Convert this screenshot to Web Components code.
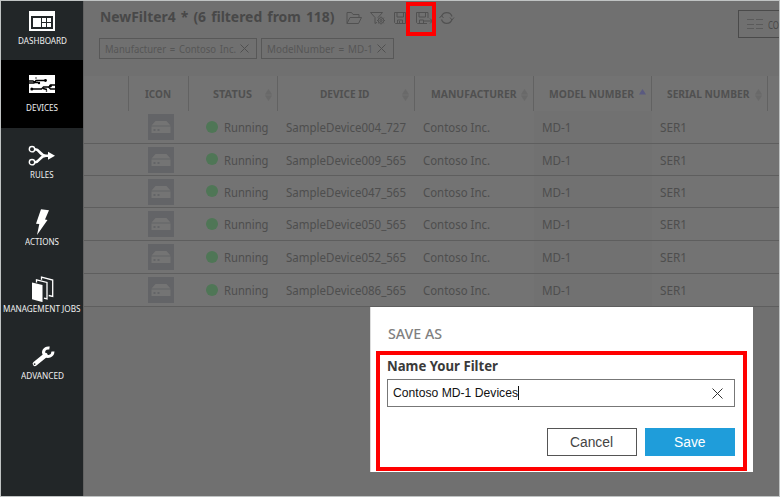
<!DOCTYPE html>
<html lang="en"><head><meta charset="utf-8"><title>Devices</title>
<style>
html,body{margin:0;padding:0;width:780px;height:497px;overflow:hidden}
body{font-family:"Noto Sans","Open Sans",sans-serif}
</style></head><body><device-app></device-app>
<script>
const define=(name,html,after)=>{
  const t=document.createElement('template');t.innerHTML=html;
  customElements.define(name,class extends HTMLElement{
    connectedCallback(){
      if(this.shadowRoot)return;
      this.attachShadow({mode:'open'}).append(t.content.cloneNode(true));
      if(after)after(this,this.shadowRoot);
    }
  });
};

/* Single line of text condensed or widened to the width in its "w" attribute */
define('fit-text',`<style>:host{display:inline-block;white-space:nowrap;flex:none}
span{display:inline-block;transform-origin:0 50%}</style><span><slot></slot></span>`,(el,r)=>{
  const s=r.querySelector('span'),w=+el.getAttribute('w');
  el.style.width=w+'px';
  s.style.transform=`scaleX(${w/s.getBoundingClientRect().width})`;
});

define('nav-item',`<style>
:host{display:flex;flex-direction:column;justify-content:flex-end;align-items:center;height:67px;padding-bottom:13px;box-sizing:border-box;color:#f0f0f0;font-size:9.5px;line-height:14px;flex:none}
:host([first]){height:59px;padding-bottom:12px}
:host([active]){background:#000;height:68px}
::slotted(svg){display:block;width:32px;height:32px;flex:none}
</style><slot name="icon"></slot><slot></slot>`);

define('side-nav',`<style>
:host{display:flex;flex-direction:column;width:82px;background:#222628}
</style>
<nav-item first><svg slot="icon" viewBox="0 0 32 32"><path fill="#fff" d="M3 9h26v20H3z"/><path fill="#222628" d="M5 14h22v13H5z"/><path fill="#fff" d="M7 16h8v9H7zM16 16h4v4h-4zM21 16h4v4h-4zM16 21h4v4h-4zM21 21h4v4h-4z"/></svg><fit-text w="49">DASHBOARD</fit-text></nav-item>
<nav-item active><svg slot="icon" viewBox="0 0 32 32"><path fill="#fff" d="M3 6h26v18H3z"/><g fill="none" stroke="#000" stroke-width="1.3"><path d="M3 14h5l2-2.5h9M3 12h4l2 1.500h3M5.500 20h10l2-2h5l2 2h4.500M17 19.500l4 1M23 18l2-2h4"/></g><g><circle cx="19.500" cy="11.500" r="1.400"/><circle cx="13" cy="14" r="1.200"/><circle cx="5.800" cy="20" r="1.500"/><circle cx="24.500" cy="17" r="1.400"/><circle cx="20.500" cy="22" r=".8"/><circle cx="10" cy="9" r=".7"/></g></svg><fit-text w="32">DEVICES</fit-text></nav-item>
<nav-item><svg slot="icon" viewBox="0 0 32 32"><g fill="none" stroke="#fff"><circle cx="6" cy="13.200" r="2.700" stroke-width="1.400"/><circle cx="6" cy="26.200" r="2.700" stroke-width="1.400"/><path stroke-width="2.600" d="M9 13.200c5 0 4.500 6.500 11 6.500M9 26.200c5 0 4.500-6.500 11-6.500h4"/></g><path fill="#fff" d="M22 15.700l7 4-7 4z"/></svg><fit-text w="23.500">RULES</fit-text></nav-item>
<nav-item><svg slot="icon" viewBox="0 0 32 32"><path fill="#fff" d="M15 6.300l8 .9-4 9.300 2.500.4-10.500 15 2.300-10.800-3.300-.4z"/></svg><fit-text w="34">ACTIONS</fit-text></nav-item>
<nav-item><svg slot="icon" viewBox="0 0 32 32"><path fill="#fff" d="M6 12.500l10.500 2.600v17L6 29.300z"/><path fill="none" stroke="#fff" stroke-width="1.300" d="M10.500 12.500V9.800l10.500 2.600v16.500l-3-.8M15.500 9.800V7.200L26.700 10v16.500l-4-1"/></svg><fit-text w="77.500">MANAGEMENT JOBS</fit-text></nav-item>
<nav-item><svg slot="icon" viewBox="0 0 32 32"><path fill="none" stroke="#fff" stroke-width="4.600" stroke-linecap="round" d="M9 26.800l10.500-8.500"/><path fill="none" stroke="#fff" stroke-width="3" d="M23.500 11c-5-.8-7.500 4-4.800 7 2.800 2.800 8 1.200 8.300-3.500"/><circle cx="8.600" cy="27.100" r=".9" fill="#222628"/></svg><fit-text w="43">ADVANCED</fit-text></nav-item>`);

define('filter-chip',`<style>
:host{display:flex;align-items:center;gap:4px;height:21px;box-sizing:border-box;border:1px solid #585858;padding:0 0 0 5px;font-size:11px;word-spacing:1.500px;color:#565656}
svg{width:9px;height:9px;fill:none;stroke:#505050;stroke-width:1}
</style><slot></slot><svg viewBox="0 0 9 9"><path d="M.5.5l8 8M8.500.5l-8 8"/></svg>`);

define('page-header',`<style>
:host{display:flex;justify-content:space-between;height:75px;color:#484848}
.left{display:flex;flex-direction:column;padding:4px 0 0 16px}
.title{display:flex;align-items:center;height:23px;font-weight:700;font-size:14px;word-spacing:1.500px}
.tools{display:block;width:112px;height:18px;margin-left:10px;fill:none;stroke:#515151;stroke-width:1}
.chips{display:flex;gap:4px;margin:10px 0 0 -1px}
.btn{display:flex;align-items:center;box-sizing:border-box;width:41px;height:28px;margin-top:9px;border:1px solid #4a4a4a;border-right:0;padding-left:8px;gap:5px;overflow:hidden;font-size:11px}
.btn svg{width:16px;height:12px;flex:none;stroke:#5a5a5a;fill:none}
</style>
<div class="left"><div class="title"><fit-text w="234.500">NewFilter4 * (6 filtered from 118)</fit-text>
<svg class="tools" viewBox="0 0 112 18">
<path d="M2 15.500V4.500h4.500l1.500 2h6v3M2 15.500l3-6h11.500l-3 6z"/>
<path d="M25.500 4.500h12l-4.500 5M25.500 4.500l4.500 5v6l2-1.200"/><circle cx="36" cy="12.500" r="2.800"/><circle cx="36" cy="12.500" r="1"/><path d="M36 8.500v1M36 15.500v1M32 12.500h1M39 12.500h1M33.200 9.700l.8.800M38 14.500l.8.800M38.800 9.700l-.8.800M34 14.500l-.8.800"/>
<path d="M49.500 4.500h11v11h-10l-1-1zM52 4.500v4.500h6.500V4.500M52.500 15.500v-3.500h5v3.500M54.500 13v2"/>
<path d="M83 10V4.500H71.500v10l1 1H82M74 4.500v4.500h6.500V4.500M74.500 15.500v-3.500h4v3.500M79 13h8.500M85 10.500l2.500 2.500-2.500 2.500"/>
<path stroke-width="1.200" d="M96.500 8.500a5.500 5.500 0 0 1 10.500 0M107 11.500a5.500 5.500 0 0 1-10.500 0"/><path d="M94.500 10l2-2.500 2 2.500M105 9.500l2 2.500 2-2.500"/>
</svg></div>
<div class="chips"><filter-chip style="width:158px"><fit-text w="131">Manufacturer = Contoso Inc.</fit-text></filter-chip><filter-chip style="width:133px"><fit-text w="106">ModelNumber = MD-1</fit-text></filter-chip></div></div>
<div class="btn"><svg viewBox="0 0 16 12"><path d="M0 1.500h7M9 1.500h7M0 6.500h7M9 6.500h7M0 10.500h7M9 10.500h7"/></svg><fit-text w="11">CO</fit-text></div>`);

define('head-cell',`<style>
:host{display:flex;align-items:center;position:relative;box-sizing:border-box;height:35px;border-right:1px solid #626262;font-size:11px;font-weight:700;color:#505050}
svg{display:none;position:absolute;right:5px;top:13px;width:7px;height:12px;fill:#696969}
:host([sort]) svg{display:block}
:host([sort=up]) svg{fill:#5a5a80}
:host([sort=up]) .dn{display:none}
</style><slot></slot><svg viewBox="0 0 7 12"><path d="M0 5.500L3.500 0 7 5.500z"/><path class="dn" d="M0 6.500L3.500 12 7 6.500z"/></svg>`);

define('device-row',`<style>
:host{display:grid;grid-template-columns:45px 60px 89px 137px 119px 118px 128px;box-sizing:border-box;border-bottom:1px solid #5e5e5e;font-size:12px;color:#4e4e4e}
div{display:flex;align-items:center;padding:1px 0 0 8px}
.ic{padding:0 0 0 19px}
.ic svg{width:26px;height:26px}
.st{padding-left:17px;gap:6px}
i{width:12px;height:12px;border-radius:50%;background:#4f7656;position:relative;top:-1px}
.m{background:#717171}
</style>
<div></div><div class="ic"><svg viewBox="0 0 26 26"><path fill="#636467" d="M0 0h26v26H0z"/><path fill="#747474" d="M7.500 7h11l4 4.500h-19zM3.500 12.500h19v6.500h-19z"/><path fill="#636467" d="M5.500 15h2v2h-2zM9.500 15h2v2h-2z"/></svg></div>
<div class="st"><i></i><fit-text w="44.500">Running</fit-text></div>
<div id="device"></div>
<div><fit-text w="67">Contoso Inc.</fit-text></div>
<div class="m"><fit-text w="29.500">MD-1</fit-text></div>
<div><fit-text w="27">SER1</fit-text></div>`,(el,r)=>{
  const n=document.createElement('fit-text');n.setAttribute('w','120');n.textContent=el.getAttribute('device');
  r.querySelector('#device').append(n);
  el.style.height=el.getAttribute('h')+'px';
});

define('device-table',`<style>
:host{display:block;background:#737373}
.head{display:grid;grid-template-columns:45px 60px 89px 137px 119px 118px 116px 12px}
.head :last-child{border:0}
</style>
<div class="head"><head-cell></head-cell><head-cell style="padding-left:16px"><fit-text w="26">ICON</fit-text></head-cell>
<head-cell sort style="padding-left:23.500px"><fit-text w="39">STATUS</fit-text></head-cell>
<head-cell sort style="padding-left:42px"><fit-text w="49.500">DEVICE ID</fit-text></head-cell>
<head-cell sort style="padding-left:15.500px"><fit-text w="85.500">MANUFACTURER</fit-text></head-cell>
<head-cell sort="up" style="padding-left:15px"><fit-text w="85">MODEL NUMBER</fit-text></head-cell>
<head-cell sort style="padding-left:15px"><fit-text w="82.500">SERIAL NUMBER</fit-text></head-cell><head-cell></head-cell></div>
<device-row h="33" device="SampleDevice004_727"></device-row>
<device-row h="32" device="SampleDevice009_565"></device-row>
<device-row h="32" device="SampleDevice047_565"></device-row>
<device-row h="33" device="SampleDevice050_565"></device-row>
<device-row h="33" device="SampleDevice052_565"></device-row>
<device-row h="33" device="SampleDevice086_565"></device-row>`);

define('save-dialog',`<style>
:host{display:block;box-sizing:border-box;width:383px;height:165px;background:#fff;padding:17px 6px 0;border-left:1px solid #ddd}
h2{margin:0 0 7px 10.500px;font-size:13.500px;line-height:20px;font-weight:500;color:#808080}
.frame{box-sizing:border-box;width:371px;height:120px;margin-left:-1px;border:4px solid red;padding:3px 8px 0 7px}
.label{font-size:13.500px;line-height:16px;font-weight:700;color:#3a3a3a;height:21px}
.field{display:flex;align-items:center;box-sizing:border-box;width:348px;height:28px;border:1px solid #777;padding:0 11px 0 5px;font:12.500px "Liberation Sans",sans-serif;color:#111}
.caret{width:1px;height:14px;background:#111}
.field svg{width:11px;height:11px;margin-left:auto;stroke:#333;fill:none}
.actions{display:flex;justify-content:flex-end;gap:8px;margin-top:21px;width:348px}
button{box-sizing:border-box;width:90px;height:28px;border:1px solid #555;background:#fff;padding:0 1px 0 0;font:14px "Liberation Sans",sans-serif;color:#444}
.save{background:#1f9dda;border-color:#1f9dda;color:#fff}
</style>
<h2><fit-text w="54">SAVE AS</fit-text></h2>
<div class="frame"><div class="label"><fit-text w="111">Name Your Filter</fit-text></div>
<div class="field"><fit-text w="125">Contoso MD-1 Devices</fit-text><span class="caret"></span><svg viewBox="0 0 11 11"><path d="M.5.5l10 10M10.500.5l-10 10"/></svg></div>
<div class="actions"><button><fit-text w="43">Cancel</fit-text></button><button class="save"><fit-text w="31.500">Save</fit-text></button></div></div>`);

define('device-app',`<style>
:host{display:flex;position:relative;box-sizing:border-box;width:780px;height:497px;border:1px solid #c0c3c3;background:#707070;overflow:hidden}
main{flex:1;min-width:0;border-left:1px solid #626262;overflow:hidden}
save-dialog{position:absolute;left:369px;top:306px}
.mark{position:absolute;left:405px;top:1px;width:30px;height:34px;box-sizing:border-box;border:4px solid red}
</style><side-nav></side-nav><main><page-header></page-header><device-table></device-table></main><div class="mark"></div><save-dialog></save-dialog>`);
</script></body></html>
